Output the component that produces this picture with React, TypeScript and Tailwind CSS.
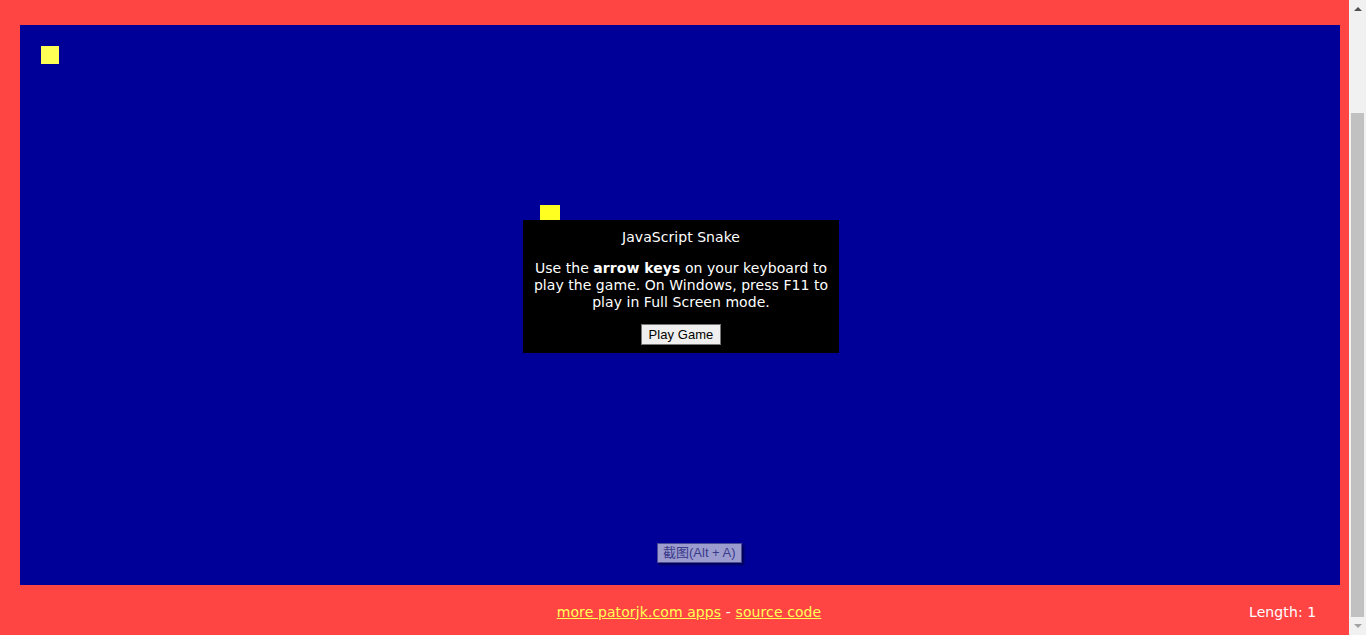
import { useState } from "react";

const font = { fontFamily: '"DejaVu Sans", Verdana, sans-serif' };

export default function App() {
  const [open, setOpen] = useState(true);

  return (
    <div className="flex h-[635px] w-[1366px] overflow-hidden bg-[#ff4444]" style={font}>
      <div className="flex w-[1349px] flex-col">
        <div className="h-[25px]" />
        <div className="relative mx-[20px] mr-[9px] h-[560px] bg-[#000099]">
          {/* food */}
          <div className="absolute left-[21px] top-[21px] h-[18px] w-[18px] bg-[#ffff55]" />
          {/* snake head */}
          <div className="absolute left-[520px] top-[180px] h-[20px] w-[20px] bg-[#ffff22]" />

          {open && (
            <div className="absolute left-[503px] top-[195px] flex h-[133px] w-[316px] flex-col items-center bg-black px-[6px] pt-[8px] text-center text-[14px] leading-[17px] tracking-[0.05px] text-white">
              <div className="pt-[1px]">JavaScript Snake</div>
              <p className="mt-[14px]">
                Use the <b>arrow keys</b> on your keyboard to play the game. On Windows, press F11 to play in Full Screen mode.
              </p>
              <button
                onClick={() => setOpen(false)}
                className="mt-[13px] h-[21px] border border-[#767676] bg-[#efefef] px-[7px] text-[13px] leading-[17px] text-black"
                style={{ fontFamily: '"Liberation Sans", Arial, sans-serif' }}
              >
                Play Game
              </button>
            </div>
          )}

          <div className="absolute left-[637px] top-[518px] flex h-[20px] items-center border border-[#4a4a99] bg-[#9c9ccf] px-[5px] text-[13px] text-[#3a3a8a] shadow-[2px_2px_2px_rgba(0,0,0,0.45)]"
            style={{ fontFamily: '"Liberation Sans", Arial, "Noto Sans CJK SC", sans-serif' }}>
            截图(Alt + A)
          </div>
        </div>
        <div className="relative flex h-[50px] items-center justify-center pl-[29px] pt-[4px] text-[14px] tracking-[0.1px] text-white">
          <span>
            <a href="#" className="text-[#ffff55] underline">more patorjk.com apps</a>
            <span> - </span>
            <a href="#" className="text-[#ffff55] underline">source code</a>
          </span>
          <span className="absolute left-[1249px]">Length: 1</span>
        </div>
      </div>

      {/* scrollbar */}
      <div className="flex w-[17px] flex-col items-center bg-[#f1f1f1]">
        <div className="flex h-[17px] items-center justify-center">
          <div className="h-0 w-0 border-x-[4px] border-b-[4px] border-x-transparent border-b-[#505050]" />
        </div>
        <div className="mt-[96px] h-[504px] w-[13px] bg-[#c1c1c1]" />
        <div className="flex flex-1 items-center justify-center">
          <div className="h-0 w-0 border-x-[4px] border-t-[4px] border-x-transparent border-t-[#a3a3a3]" />
        </div>
      </div>
    </div>
  );
}
